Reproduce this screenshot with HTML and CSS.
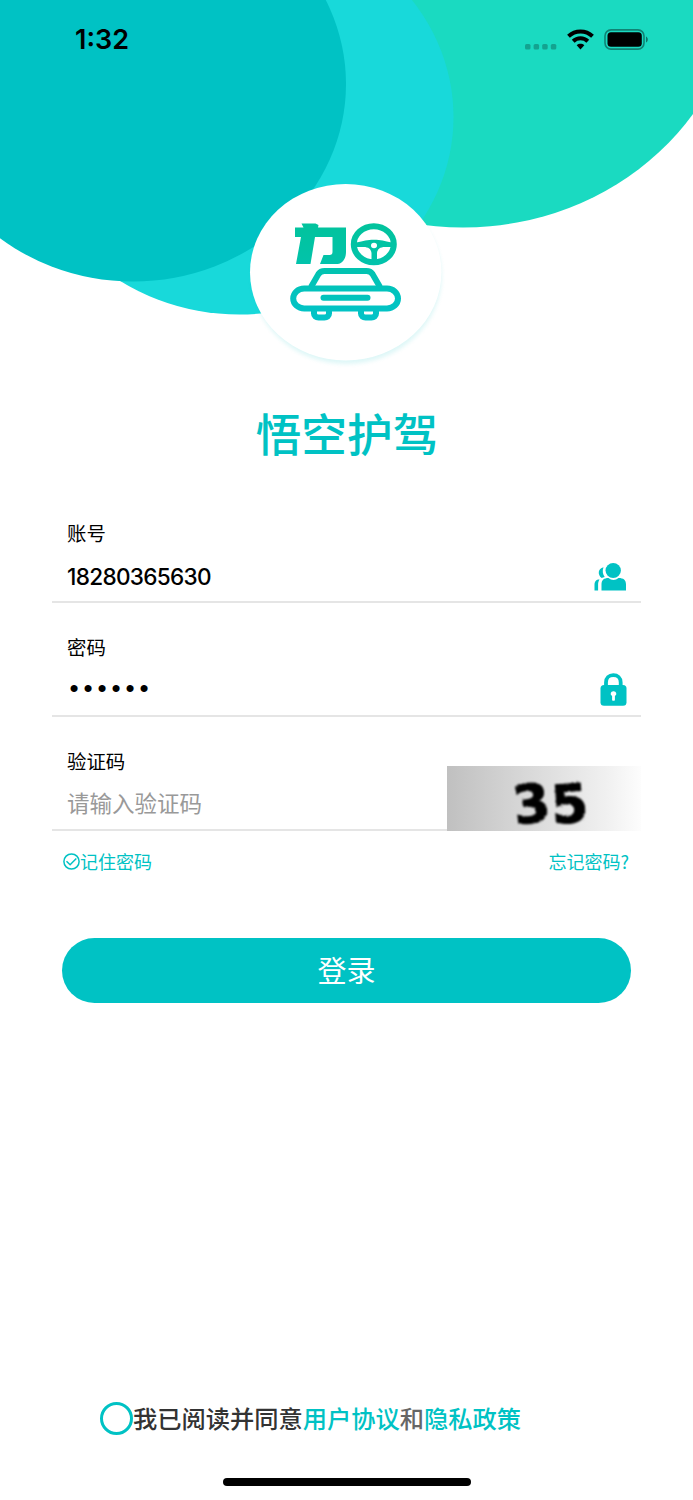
FILE: index.html
```html
<!DOCTYPE html>
<html lang="zh-CN">
<head>
	<meta charset="UTF-8">
	<title>悟空护驾</title>
	<link rel="stylesheet" href="styles.css">
</head>
<body>
	<div class="page">
		<div class="hero">
			<svg class="hero_bg" width="693" height="400" viewBox="0 0 693 400">
				<defs>
					<linearGradient id="logo" gradientUnits="userSpaceOnUse" x1="0" y1="222" x2="0" y2="322">
						<stop offset="0" stop-color="#02c39c"/>
						<stop offset="0.35" stop-color="#02c3a8"/>
						<stop offset="0.75" stop-color="#02c3c0"/>
						<stop offset="1" stop-color="#02c3c8"/>
					</linearGradient>
					<filter id="shadow" x="-10%" y="-10%" width="120%" height="120%">
						<feGaussianBlur stdDeviation="2"/>
					</filter>
				</defs>
				<ellipse cx="463" cy="-29" rx="277" ry="256.5" fill="#1adac1"/>
				<ellipse cx="239.5" cy="117" rx="214" ry="197.5" fill="#18d9da"/>
				<ellipse cx="133" cy="84" rx="213" ry="197.5" fill="#00c2c4"/>
				<ellipse cx="346.5" cy="276" rx="95" ry="88" fill="#00c2c4" opacity="0.13" filter="url(#shadow)"/>
				<ellipse cx="345.7" cy="272.2" rx="95.7" ry="88.2" fill="#fff"/>
				<!-- 力 -->
				<path d="M301.500 223.500h14l3 1.500-.5 2.500h28v24.500c0 6-3 11.500-8.500 12h-17.500l3.500-9h6c2 0 3-1 3-3v-15h-17.500l-4.500 27h-14.500l5-27h-6v-9.500h8.500z" fill="url(#logo)"/>
				<!-- 方向盘 -->
				<ellipse cx="373.8" cy="244.3" rx="20" ry="18" fill="none" stroke="url(#logo)" stroke-width="6"/>
				<path d="M356 242.500c8-1.500 11-2.800 18-2.800s10 1.300 18 2.800v4.500h-7c-5 0-7.500 2-8 6v9h-5.500v-9c-.5-4-3-6-8-6h-7.500z" fill="url(#logo)"/>
				<ellipse cx="374" cy="245.500" rx="3" ry="2.700" fill="#fff"/>
				<!-- 汽车 -->
				<g fill="none" stroke="url(#logo)" stroke-width="6">
					<path d="M311 287l7.500-13c1.500-2.300 3-3 6-3h42c3 0 4.500.7 6 3l7.500 13"/>
					<rect x="293.2" y="288.500" width="104.800" height="20" rx="11" ry="10"/>
					<path d="M314 310v3.500c0 2.500 2 4 4.500 4h6c2.500 0 4.500-1.500 4.500-4V310M361 310v3.500c0 2.500 2 4 4.500 4h6c2.500 0 4.500-1.500 4.500-4V310"/>
					<path d="M323.500 297.800h44" stroke="#02c3bc" stroke-linecap="round"/>
				</g>
			</svg>
			<div class="status">
				<span class="time">1:32</span>
				<svg class="status_icons" width="126" height="26" viewBox="0 0 126 26">
					<g fill="#000" fill-opacity="0.25">
						<rect x="1" y="17" width="5.500" height="5.500" rx="1.500"/>
						<rect x="9.600" y="17" width="5.500" height="5.500" rx="1.500"/>
						<rect x="18.200" y="17" width="5.500" height="5.500" rx="1.500"/>
						<rect x="26.800" y="17" width="5.500" height="5.500" rx="1.500"/>
					</g>
					<g fill="none" stroke="#000" stroke-width="4">
						<path d="M44.500 9.300c6.700-6.400 17.300-6.400 24 0"/>
						<path d="M49.200 14.300c4.100-4 10.500-4 14.600 0"/>
					</g>
					<path d="M52.700 18.200c2.200-1.900 5.400-1.900 7.600 0l-3.800 4.300z"/>
					<rect x="81" y="2.900" width="39" height="19.200" rx="6" fill="none" stroke="#000" stroke-opacity="0.4" stroke-width="1.600"/>
					<rect x="83.500" y="5.300" width="34.300" height="14.500" rx="3.500"/>
					<path d="M122 9.500c2.400.8 2.400 5.200 0 6z" fill-opacity="0.45"/>
				</svg>
			</div>
		</div>
		<h1 class="title">悟空护驾</h1>
		<div class="form">
			<div class="field">
				<label>账号</label>
				<div class="row">
					<span class="number">18280365630</span>
					<svg class="icon" width="33" height="30" viewBox="0 0 33 30">
						<g fill="#00c2c4">
							<ellipse cx="19.200" cy="8.500" rx="7.700" ry="7.500"/>
							<path d="M7.500 28.500v-6c0-4.500 2.500-6.500 7-6.500 3 2.600 7 2.600 10 0 5 0 7.500 2 7.500 6.500v6z"/>
							<path d="M9.500 5.200c-1.300 3.500-.8 7 1.200 9.800-1.300.3-2.200.6-3 1C3.200 12.500 4 6.300 9.500 5.200z"/>
							<path d="M.5 28.500v-5.500c0-3.500 1.500-5.500 5-5.500-1 1.500-1.400 3.200-1.400 5v6z"/>
						</g>
					</svg>
				</div>
			</div>
			<div class="field">
				<label>密码</label>
				<div class="row">
					<span class="dots"><i>•</i><i>•</i><i>•</i><i>•</i><i>•</i><i>•</i></span>
					<svg width="27" height="34" viewBox="0 0 27 34">
						<path d="M6 14.500V9.500C6 5 9 2.200 13.300 2.200S20.700 5 20.700 9.500v5" fill="none" stroke="#00c2c4" stroke-width="3.800"/>
						<rect x="0.500" y="12" width="26" height="20.800" rx="3.500" fill="#00c2c4"/>
						<path d="M13.500 18.200a2.700 2.500 0 0 1 1.400 4.700v4.400q-1.400 1-2.800 0v-4.400a2.700 2.500 0 0 1 1.400-4.700z" fill="#fff"/>
					</svg>
				</div>
			</div>
			<div class="field">
				<label>验证码</label>
				<div class="row">
					<span class="placeholder">请输入验证码</span>
				</div>
				<svg class="captcha" width="194" height="65" viewBox="0 0 194 65">
					<defs>
						<linearGradient id="gray">
							<stop offset="0" stop-color="#c0c0c0"/>
							<stop offset="0.85" stop-color="#f2f2f2"/>
							<stop offset="1" stop-color="#fdfdfd"/>
						</linearGradient>
						<filter id="rough" x="-10%" y="-10%" width="120%" height="120%">
							<feTurbulence type="fractalNoise" baseFrequency="0.6" numOctaves="1" result="noise"/>
							<feDisplacementMap in="SourceGraphic" in2="noise" scale="3"/>
							<feGaussianBlur stdDeviation="0.8"/>
						</filter>
					</defs>
					<rect width="194" height="65" fill="url(#gray)"/>
					<g class="code" filter="url(#rough)">
						<text x="66" y="56.500" transform="rotate(-7 84 37)">3</text>
						<text x="104" y="56.500" transform="rotate(-4 122 37)">5</text>
					</g>
				</svg>
			</div>
		</div>
		<div class="options">
			<span class="remember">
				<svg width="17" height="17" viewBox="0 0 17 17" fill="none" stroke="#00c2c4" stroke-width="1.500">
					<circle cx="8.500" cy="8.500" r="7.600"/>
					<path d="M3.500 8.200l3.600 3.600L13.300 5.500"/>
				</svg>记住密码</span>
			<span>忘记密码?</span>
		</div>
		<div class="login">登录</div>
		<div class="agree">
			<i class="radio"></i>
			<p>我已阅读并同意<a>用户协议</a><em>和</em><a>隐私政策</a></p>
		</div>
		<div class="home"></div>
	</div>
</body>
</html>
```
FILE: styles.css
```css
body,h1,p{margin: 0;padding: 0;}
i,em{font-style: normal;}
svg{display: block;}

.page{width: 693px;height: 1500px;display: flex;flex-direction: column;background: #fff;overflow: hidden;font-family: "Noto Sans CJK SC",sans-serif;color: #000;}

.hero{height: 400px;position: relative;}
.status{box-sizing: border-box;width: 100%;position: absolute;top: 27px;left: 0;padding: 0 43px 0 75px;display: flex;justify-content: space-between;align-items: center;height: 26px;}
.time{font: 600 27px/26px Inter,sans-serif;}

.title{height: 70px;line-height: 64px;padding-left: 1px;text-align: center;font-size: 45.7px;font-weight: 500;color: #00c2c4;}

.form{margin: 19px 52px 0;}
.field{box-sizing: border-box;height: 114px;padding: 30px 14px 0 15px;border-bottom: 2px solid #e5e5e5;position: relative;}
.field label{display: block;font-size: 19.4px;line-height: 28px;}
.row{display: flex;justify-content: space-between;align-items: center;height: 50px;padding-top: 4px;}
.number{font: 500 22.6px/30px Inter,sans-serif;letter-spacing: -0.7px;padding-top: 1px;}
.icon{padding-top: 1px;}
.placeholder{font-size: 22.5px;line-height: 34px;padding-bottom: 4px;color: #999;}
.dots{display: flex;padding-bottom: 4px;}
.dots i{width: 14px;text-align: center;font: 26px/30px "Liberation Sans",sans-serif;}
.captcha{position: absolute;right: 0;bottom: -2px;overflow: visible;}
.code{font: bold 53px "DejaVu Sans",sans-serif;stroke: #000;stroke-width: 1.2px;}

.options{display: flex;justify-content: space-between;align-items: center;height: 30px;margin: 15px 64px 0 63px;font-size: 18px;color: #00c2c4;}
.remember{display: flex;align-items: center;}

.login{height: 65px;line-height: 63px;margin: 62px 62px 0;border-radius: 33px;background: #00c2c4;color: #fff;font-size: 29px;text-align: center;}

.agree{display: flex;align-items: center;height: 34px;margin: 398px 0 0 100px;font-size: 24.25px;font-weight: 500;color: #333;}
.agree p{line-height: 34px;padding-bottom: 1px;}
.agree a{color: #00c2c4;}
.agree em{color: #666;}
.radio{box-sizing: border-box;width: 33px;height: 33px;border: 3px solid #00c2c4;border-radius: 50%;}

.home{width: 248px;height: 8px;margin: 43px auto 0;border-radius: 4px;background: #000;}
```
